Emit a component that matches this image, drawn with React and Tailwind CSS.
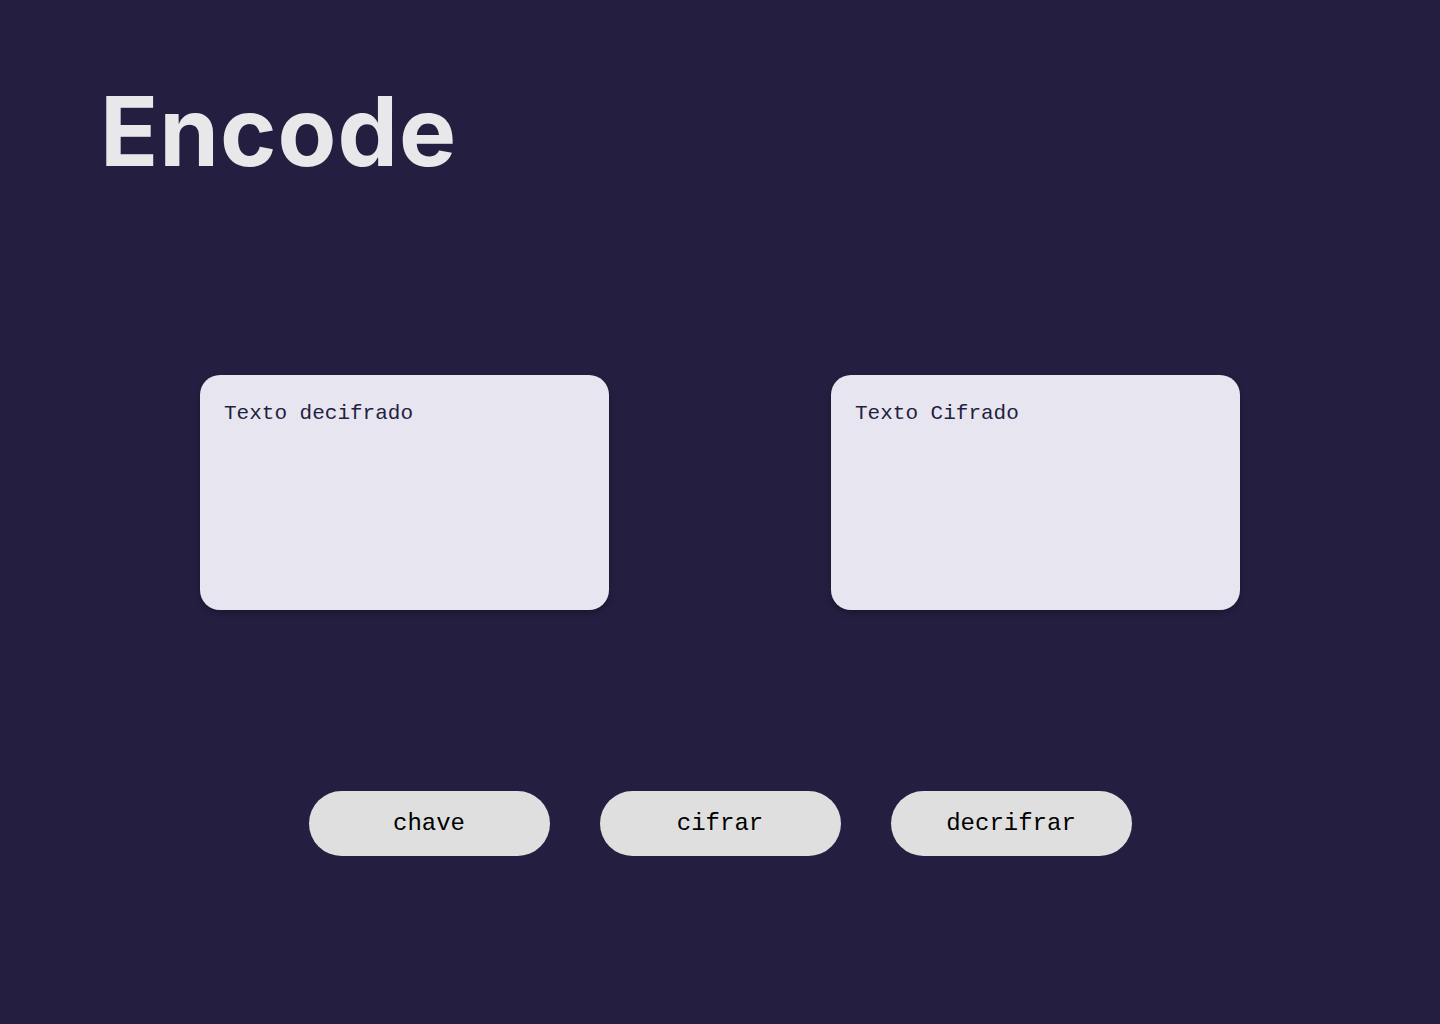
export default function App() {
  return (
    <div className="w-[1440px] h-[1024px] bg-[#241e41] flex flex-col overflow-hidden">
      <h1 className="pl-[100px] pt-[83px] text-[96px] leading-none font-bold text-[#e8e8ea] tracking-[1px]" style={{ fontFamily: 'Inter, "Noto Sans", sans-serif' }}>
        Encode
      </h1>
      <div className="mt-[196px] flex justify-center gap-[222px]">
        <div className="w-[409px] h-[235px] rounded-[20px] bg-[#e7e6f0] shadow-[0_3px_6px_rgba(0,0,0,0.25)] px-[24px] pt-[26px]">
          <p className="text-[21px] leading-[26px] text-[#241e41]" style={{ fontFamily: '"Liberation Mono", "DejaVu Sans Mono", monospace' }}>Texto decifrado</p>
        </div>
        <div className="w-[409px] h-[235px] rounded-[20px] bg-[#e7e6f0] shadow-[0_3px_6px_rgba(0,0,0,0.25)] px-[24px] pt-[26px]">
          <p className="text-[21px] leading-[26px] text-[#241e41]" style={{ fontFamily: '"Liberation Mono", "DejaVu Sans Mono", monospace' }}>Texto Cifrado</p>
        </div>
      </div>
      <div className="mt-[181px] flex justify-center gap-[50px]">
        {["chave", "cifrar", "decrifrar"].map((t) => (
          <button key={t} className="w-[241px] h-[65px] rounded-full bg-[#dfdfdf] text-[24px] text-black flex items-center justify-center" style={{ fontFamily: '"Liberation Mono", "DejaVu Sans Mono", monospace' }}>
            {t}
          </button>
        ))}
      </div>
    </div>
  );
}
